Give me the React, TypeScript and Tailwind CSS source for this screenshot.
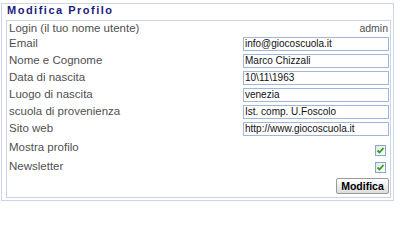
import React from "react";

const Check = () => (
  <div className="w-[11px] h-[11px] border border-[#8ea4c4] bg-gradient-to-br from-[#e6e6e0] to-white flex items-center justify-center">
    <svg width="9" height="9" viewBox="0 0 9 9">
      <path d="M1.5 4.5 L3.5 6.5 L7.5 2" stroke="#22a322" strokeWidth="1.8" fill="none" />
    </svg>
  </div>
);

const fields: [string, string][] = [
  ["Email", "info@giocoscuola.it"],
  ["Nome e Cognome", "Marco Chizzali"],
  ["Data di nascita", "10\\11\\1963"],
  ["Luogo di nascita", "venezia"],
  ["scuola di provenienza", "Ist. comp. U.Foscolo"],
  ["Sito web", "http://www.giocoscuola.it"],
];

export default function App() {
  return (
    <div className="w-[400px] h-[207px] bg-white pt-[3px] pl-[1px] font-['Liberation_Sans',Arial,sans-serif]">
      <div className="w-[393px] h-[198px] border border-[#c9d3ec] flex flex-col">
        <div className="h-[16px] pl-[5px] text-[11px] leading-[13px] font-bold tracking-[1.5px] text-[#1b1d7e]">
          Modifica Profilo
        </div>
        <div className="ml-[4px] mr-[2px] mb-[2px] flex-1 border border-[#c9d3ec] pl-[2px] pr-[1px] flex flex-col text-[11.5px] text-[#505050]">
          <div className="h-[14px] flex justify-between items-center leading-[14px]">
            <span>Login (il tuo nome utente)</span>
            <span className="pr-[1px] text-[10.5px]">admin</span>
          </div>
          {fields.map(([label, value]) => (
            <div key={label} className="h-[17px] flex justify-between items-center">
              <span className="leading-[17px]">{label}</span>
              <div className="w-[146px] h-[14px] border border-[#a3b6d6] bg-white pl-[1px] text-[10px] leading-[12px] text-[#111]">
                {value}
              </div>
            </div>
          ))}
          <div className="h-[20px] flex justify-between items-start">
            <span className="leading-[20px]">Mostra profilo</span>
            <div className="mt-[8px] mr-[3px]">
              <Check />
            </div>
          </div>
          <div className="h-[19px] flex justify-between items-start">
            <span className="leading-[19px]">Newsletter</span>
            <div className="mt-[5px] mr-[3px]">
              <Check />
            </div>
          </div>
          <div className="flex justify-end">
            <button className="mt-[2px] w-[53px] h-[16px] border border-[#9a9a9a] rounded-[2px] bg-gradient-to-b from-white to-[#dcdcdc] text-[10.5px] font-bold text-black leading-[14px]">
              Modifica
            </button>
          </div>
        </div>
      </div>
    </div>
  );
}
